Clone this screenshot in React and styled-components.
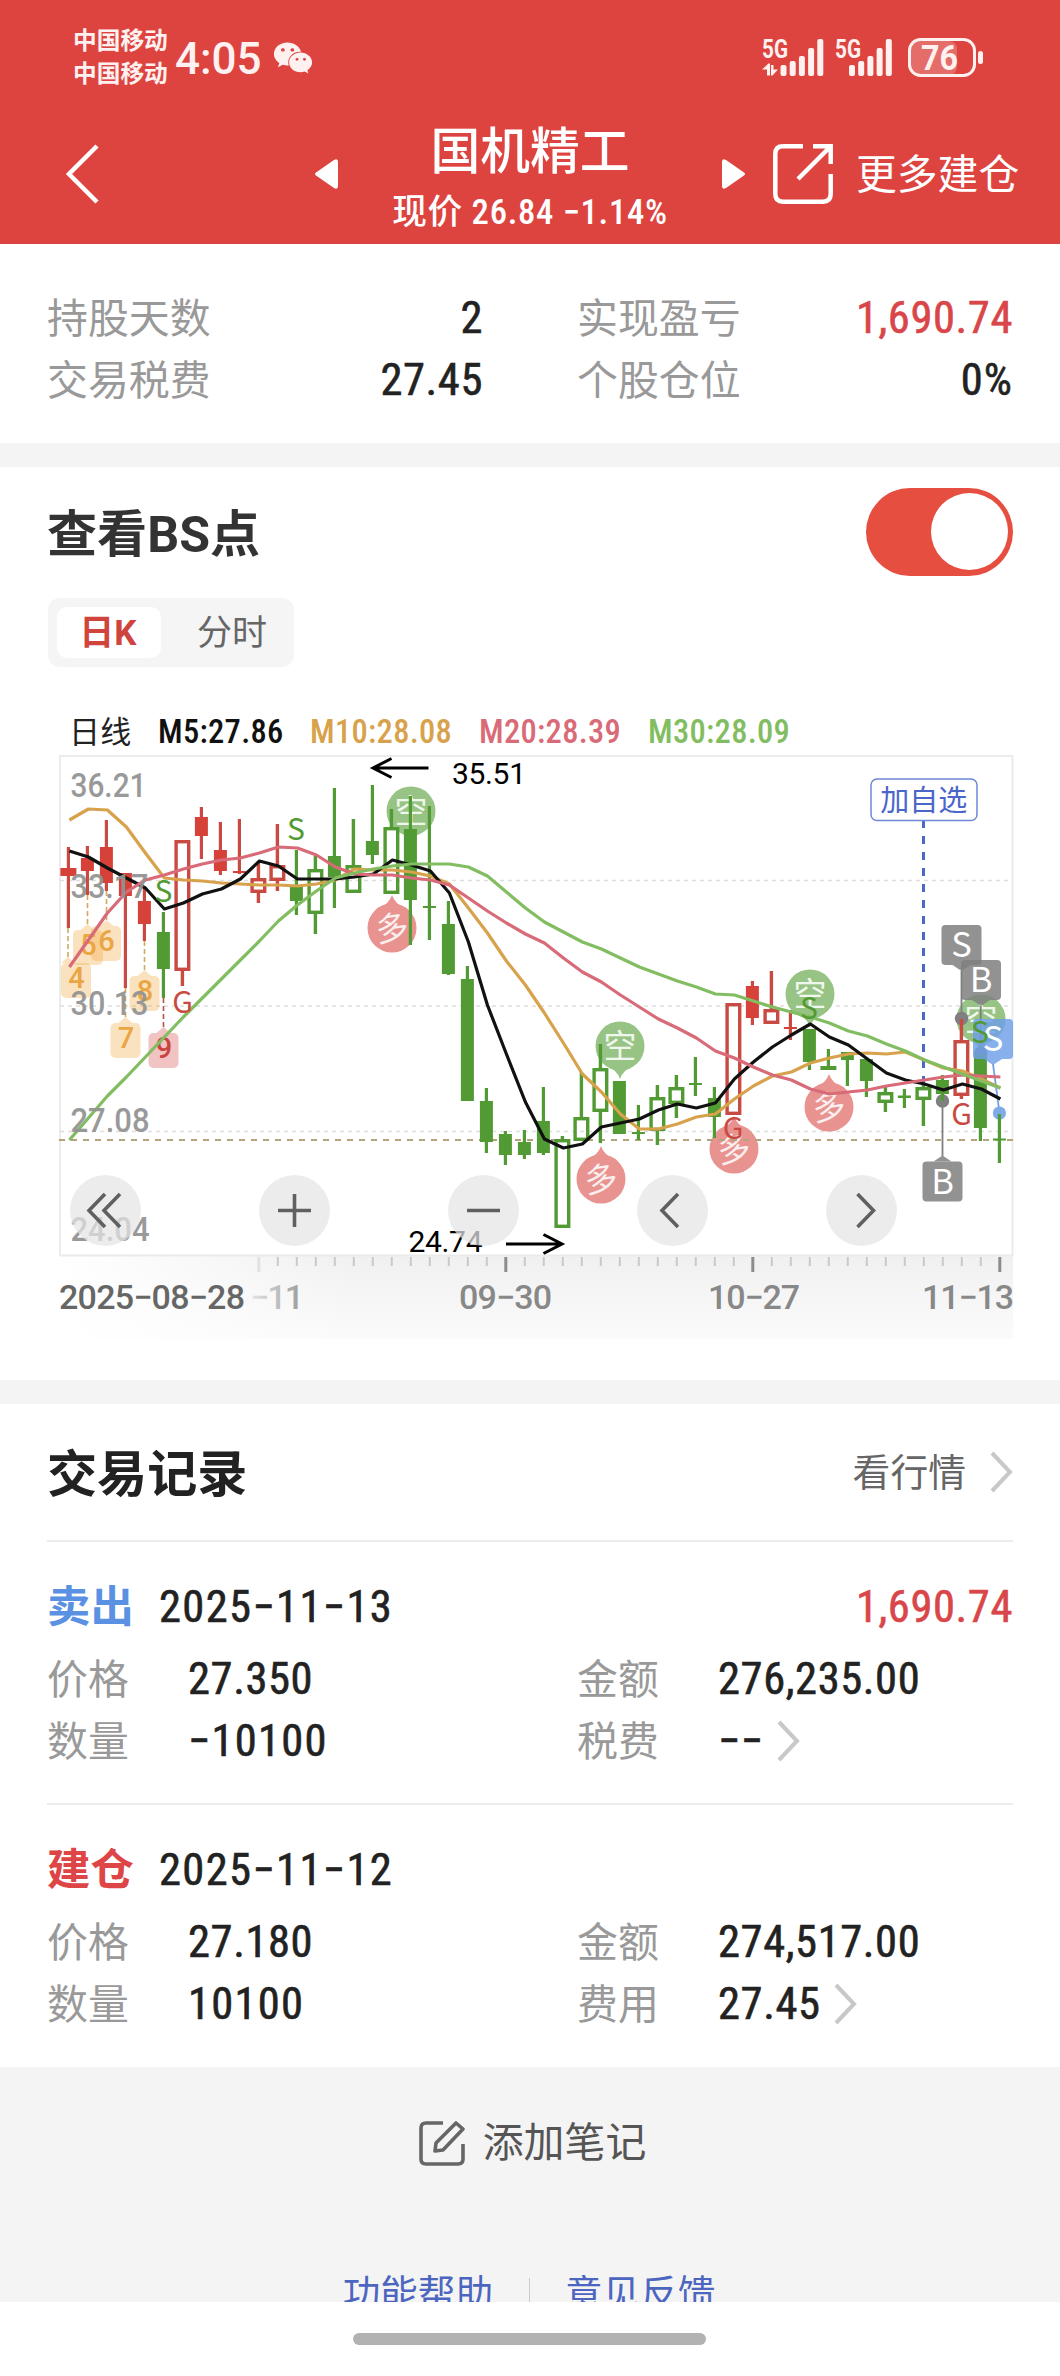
import React, { useState } from 'react';
import styled, { createGlobalStyle } from 'styled-components';
import { FaWeixin } from 'react-icons/fa';

const RED = '#dd4440';
const UP = '#c94a42';
const UP_FILL = '#d64239';
const DOWN = '#529a33';

const GlobalStyle = createGlobalStyle`
  * {
    box-sizing: border-box;
  }
  body {
    margin: 0;
    background: #fff;
    font-family: Roboto, 'Noto Sans CJK SC', sans-serif;
    color: #222;
  }
`;

const Page = styled.div`
  width: 1060px;
  height: 2376px;
  display: flex;
  flex-direction: column;
  overflow: hidden;
`;

/* ---------- header ---------- */

const Header = styled.header`
  height: 244px;
  background: ${RED};
  color: #fff;
`;
const StatusBar = styled.div`
  height: 104px;
  padding: 11px 76px 0 73px;
  display: flex;
  align-items: center;
  color: #fff1f0;
`;
const Carriers = styled.div`
  width: 102px;
  font-size: 23.7px;
  font-weight: 700;
  line-height: 33px;
  white-space: nowrap;
`;
const Clock = styled.div`
  width: 98px;
  padding-top: 2px;
  font-size: 44px;
  font-weight: 500;
  line-height: 50px;
`;
const StatusIcons = styled.div`
  margin-left: auto;
  display: flex;
  align-items: center;

  svg {
    overflow: visible;
  }
`;
const NavBar = styled.div`
  height: 140px;
  padding-left: 65px;
  display: flex;
  align-items: center;
`;
const TitleBlock = styled.div`
  width: 384px;
  padding-top: 11px;
  text-align: center;
`;
const StockName = styled.h1`
  margin: 0;
  font-size: 49.8px;
  font-weight: 500;
  line-height: 64px;
`;
const StockPrice = styled.div`
  font-size: 34.7px;
  font-weight: 500;
  font-stretch: 87%;
  letter-spacing: 0.7px;
  line-height: 56px;
`;
const BackIcon = styled.svg`
  margin-right: 216px;
`;
const ShareIcon = styled.svg`
  margin: 0 23px 0 28px;
`;
const MoreText = styled.span`
  padding-top: 2px;
  font-size: 40.8px;
  line-height: 60px;
  white-space: nowrap;
`;

/* ---------- shared ---------- */

const Section = styled.section`
  padding: 0 47px;
  background: #fff;
  height: ${(p) => p.$height}px;
`;
const Band = styled.div`
  height: 24px;
  background: #f4f4f4;
`;
const Label = styled.span`
  font-size: 40.9px;
  color: #999;
  width: ${(p) => (p.$width ? `${p.$width}px` : 'auto')};
`;
const Num = styled.span`
  font-size: 44.5px;
  font-weight: 400;
  font-stretch: 87%;
  -webkit-text-stroke: 0.6px currentColor;
  letter-spacing: ${(p) => p.$spacing ?? 0.6}px;
  color: ${(p) => p.$color || '#222'};
`;
const SectionTitle = styled.h2`
  margin: 0;
  padding-top: 5px;
  font-size: 50.1px;
  font-weight: 700;
  line-height: 60px;
  color: ${(p) => p.$color || '#222'};
`;

/* ---------- summary ---------- */

const Summary = styled(Section)`
  padding-top: 43px;
`;
const SummaryGrid = styled.div`
  display: grid;
  grid-template-columns: 436px 436px;
  column-gap: 94px;
  grid-auto-rows: 62px;
`;
const SummaryItem = styled.div`
  display: flex;
  justify-content: space-between;
  align-items: baseline;
  line-height: 62px;
`;

/* ---------- chart ---------- */

const TitleRow = styled.div`
  display: flex;
  align-items: center;
  justify-content: space-between;
`;
const ChartHead = styled(TitleRow)`
  padding-top: 21px;
`;
const Switch = styled.button`
  width: 147px;
  height: 88px;
  padding: 5px;
  border: 0;
  border-radius: 44px;
  background: ${(p) => (p.$on ? '#e64e40' : '#ddd')};
  display: flex;
  justify-content: ${(p) => (p.$on ? 'flex-end' : 'flex-start')};
`;
const Knob = styled.span`
  width: 77px;
  height: 77px;
  border-radius: 50%;
  background: #fff;
`;
const Tabs = styled.div`
  width: 246px;
  height: 69px;
  margin: 22px 0 0 1px;
  padding: 9px;
  display: flex;
  border-radius: 12px;
  background: #f5f5f5;
`;
const Tab = styled.button`
  width: ${(p) => (p.$active ? 104 : 124)}px;
  height: 51px;
  padding: ${(p) => (p.$active ? '0 2px 0 0' : '0 0 0 18px')};
  border: 0;
  border-radius: 10px;
  font-family: inherit;
  font-size: 35px;
  font-weight: ${(p) => (p.$active ? 700 : 400)};
  line-height: 54px;
  background: ${(p) => (p.$active ? '#fff' : 'none')};
  color: ${(p) => (p.$active ? '#cf443c' : '#666')};
`;
const Legend = styled.div`
  margin-top: 44px;
  padding-left: 22px;
  height: 44px;
  display: flex;
  gap: 29px;
  line-height: 43px;
  white-space: nowrap;
`;
const LegendItem = styled.span`
  color: ${(p) => p.$color};
  font-size: ${(p) => p.$size || 32.5}px;
  font-weight: ${(p) => p.$weight || 500};
  font-stretch: 87%;
  letter-spacing: 0.3px;
  width: ${(p) => p.$width}px;
`;
const ChartBox = styled.div`
  position: relative;
  margin: 0 0 0 -7px;
  width: 980px;
  height: 590px;
`;
const ChartButtons = styled.div`
  position: absolute;
  left: 30px;
  top: 420px;
  display: flex;
  gap: 118px;
`;
const RoundButton = styled.button`
  width: 71px;
  height: 71px;
  padding: 0;
  border: 0;
  border-radius: 50%;
  background: rgba(228, 228, 228, 0.72);
  display: flex;
`;

/* ---------- trades ---------- */

const TradesHead = styled(TitleRow)`
  height: 138px;
  border-bottom: 2px solid #ececec;
`;
const QuoteLink = styled.span`
  display: flex;
  align-items: center;
  gap: 23px;
  font-size: 37.8px;
  line-height: 42px;
  color: #666;

  span {
    padding-top: 2px;
  }
`;
const Trade = styled.article`
  height: 263px;
  padding-top: 32px;
  border-bottom: ${(p) => (p.$last ? '0' : '2px solid #ececec')};
`;
const TradeHead = styled.div`
  display: flex;
  align-items: baseline;
  height: 74px;
  line-height: 66px;
`;
const Side = styled.span`
  width: 112px;
  font-size: 43.4px;
  font-weight: 700;
  color: ${(p) => p.$color};
`;
const Profit = styled(Num)`
  margin-left: auto;
`;
const TradeGrid = styled.div`
  display: grid;
  grid-template-columns: 530px 1fr;
  grid-auto-rows: 62px;
`;
const Field = styled.div`
  display: flex;
  align-items: baseline;
  line-height: 62px;

  svg {
    margin-left: 12px;
    align-self: center;
  }
`;

/* ---------- footer ---------- */

const Footer = styled.footer`
  height: 235px;
  padding-top: 46px;
  background: #f4f4f4;
  overflow: hidden;
`;
const NoteButton = styled.div`
  display: flex;
  justify-content: center;
  align-items: center;
  gap: 18px;
  height: 60px;
  padding-left: 5px;
  font-size: 40.9px;
  line-height: 60px;
  color: #555;

  span {
    height: 60px;
  }
`;
const Links = styled.div`
  display: flex;
  justify-content: center;
  margin-top: 94px;
  padding-right: 2px;
  font-size: 37.6px;
  line-height: 54px;
  color: #4c66c0;
`;
const LinkDivider = styled.i`
  width: 1px;
  height: 40px;
  margin: 11px 35px 0 36px;
  background: #ccc;
`;
const HomeArea = styled.div`
  height: 74px;
  display: flex;
  justify-content: center;
  align-items: center;
  padding-right: 1px;
`;
const HomeBar = styled.div`
  width: 353px;
  height: 12px;
  border-radius: 6px;
  background: #b2b2b2;
`;

/* ---------- chart data ---------- */

// [high, body top, body bottom, low, kind]
// r / g = filled, R / G = hollow, a body under 3px is a doji
const candles = [
  [847, 868, 876, 928, 'r'],
  [846, 858, 871, 895, 'r'],
  [820, 847, 883, 891, 'r'],
  [873, 873, 896, 988, 'r'],
  [888, 901, 924, 941, 'r'],
  [912, 932, 969, 998, 'g'],
  [840, 840, 971, 986, 'R'],
  [807, 817, 836, 859, 'r'],
  [822, 850, 871, 875, 'r'],
  [819, 871, 873, 874, 'r'],
  [863, 878, 893, 903, 'R'],
  [824, 865, 881, 891, 'R'],
  [850, 886, 901, 915, 'g'],
  [856, 869, 914, 934, 'G'],
  [788, 856, 877, 908, 'g'],
  [819, 865, 893, 893, 'G'],
  [785, 841, 855, 864, 'g'],
  [809, 827, 894, 894, 'G'],
  [796, 829, 900, 945, 'g'],
  [806, 906, 908, 940, 'g'],
  [901, 924, 974, 975, 'g'],
  [966, 979, 1101, 1101, 'g'],
  [1088, 1101, 1142, 1153, 'g'],
  [1131, 1134, 1155, 1165, 'g'],
  [1130, 1142, 1155, 1159, 'g'],
  [1087, 1121, 1153, 1155, 'g'],
  [1136, 1139, 1228, 1228, 'G'],
  [1072, 1117, 1141, 1141, 'G'],
  [1044, 1068, 1112, 1143, 'G'],
  [1081, 1081, 1134, 1134, 'g'],
  [1105, 1132, 1134, 1140, 'g'],
  [1085, 1097, 1131, 1145, 'G'],
  [1075, 1087, 1104, 1118, 'G'],
  [1057, 1083, 1085, 1096, 'g'],
  [1087, 1098, 1117, 1138, 'g'],
  [1003, 1003, 1115, 1115, 'R'],
  [981, 986, 1018, 1025, 'r'],
  [971, 1009, 1024, 1024, 'R'],
  [1010, 1027, 1029, 1040, 'r'],
  [1029, 1029, 1062, 1070, 'g'],
  [1049, 1066, 1070, 1070, 'g'],
  [1052, 1052, 1060, 1086, 'g'],
  [1059, 1059, 1081, 1097, 'g'],
  [1087, 1092, 1103, 1112, 'G'],
  [1089, 1095.5, 1098, 1108, 'g'],
  [1084, 1087, 1100, 1126, 'G'],
  [1075, 1080, 1094, 1101, 'g'],
  [1019, 1040, 1096, 1099, 'R'],
  [1054, 1054, 1128, 1141, 'g'],
  [1114, 1138.5, 1140.5, 1163, 'g'],
];

const averages = [
  {
    color: '#d8a24c',
    points: [
      820, 809, 810, 827, 853, 878, 880, 881, 883, 884, 885, 885, 886, 884, 880, 869, 870, 870,
      872, 876, 884, 908, 933, 961, 985, 1013, 1043, 1074, 1092, 1114, 1129, 1129, 1124, 1117,
      1114, 1099, 1086, 1076, 1072, 1063, 1058, 1054, 1053, 1054, 1052, 1060, 1068, 1071, 1079,
      1088,
    ],
  },
  {
    color: '#111',
    points: [
      851, 857, 868, 878, 888, 909, 903, 894, 889, 879, 861, 866, 879, 879, 879, 877, 874, 860,
      865, 871, 893, 942, 1005, 1054, 1102, 1139, 1148, 1144, 1127, 1123, 1119, 1110, 1104, 1108,
      1103, 1079, 1062, 1047, 1035, 1024, 1037, 1045, 1059, 1073, 1080, 1084, 1090, 1084, 1089,
      1099,
    ],
  },
  {
    color: '#d96a78',
    points: [
      967, 940, 913, 892, 880, 875, 869, 864, 860, 858, 853, 847, 848, 855, 867, 874, 875, 875,
      878, 880, 885, 898, 911, 923, 934, 943, 958, 972, 982, 995, 1007, 1019, 1028, 1038, 1051,
      1058, 1067, 1075, 1080, 1089, 1094, 1092, 1090, 1086, 1083, 1080, 1077, 1075, 1076, 1077,
    ],
  },
  {
    color: '#82bd61',
    points: [
      1140, 1118, 1096, 1077, 1057, 1037, 1017, 998, 979, 960, 941, 921, 905, 891, 878, 873, 869,
      866, 864, 864, 864, 867, 876, 892, 908, 922, 932, 942, 949, 958, 967, 974, 981, 987, 994,
      995, 1001, 1007, 1012, 1017, 1023, 1031, 1036, 1044, 1051, 1060, 1067, 1074, 1081, 1088,
    ],
  },
];

const nineTurns = [
  { n: 4, x: 61, y: 963, tip: 68, from: 928 },
  { n: 5, x: 73, y: 930, tip: 87.5, from: 895 },
  { n: 6, x: 91, y: 926, tip: 106.5, from: 891 },
  { n: 7, x: 110.5, y: 1023, tip: 125.5, from: 988 },
  { n: 8, x: 129.5, y: 976, tip: 144.5, from: 941 },
  { n: 9, x: 148.5, y: 1033, tip: 163.5, from: 998, hot: true },
];

const balloons = [
  { text: '空', x: 411, y: 811 },
  { text: '空', x: 620, y: 1046 },
  { text: '空', x: 810, y: 994 },
  { text: '空', x: 981, y: 1019 },
  { text: '多', x: 392, y: 928 },
  { text: '多', x: 601, y: 1179 },
  { text: '多', x: 734, y: 1149 },
  { text: '多', x: 829, y: 1107 },
];

const letters = [
  ['S', 163.5, 902],
  ['S', 296, 840],
  ['S', 809, 1019],
  ['S', 980, 1043],
  ['G', 182.5, 1013],
  ['G', 733, 1139],
  ['G', 961.5, 1125],
];

const priceLabels = [
  ['36.21', 797, 74],
  ['33.17', 898, 76],
  ['30.13', 1015, 76],
  ['27.08', 1132, 77],
  ['24.04', 1241, 77],
];

const dateLabels = [
  ['09−30', 460, 91],
  ['10−27', 709, 90],
  ['11−13', 923, 90],
];

const candleX = (i) => 68.4 + i * 19;

const Candle = ({ index, data }) => {
  const [high, top, bottom, low, kind] = data;
  const x = candleX(index);
  const rising = kind.toLowerCase() === 'r';
  const stroke = rising ? UP : DOWN;

  if (kind === 'R' || kind === 'G') {
    return (
      <g stroke={stroke} strokeWidth="3.4" fill="none">
        {top - high > 1 && <path d={`M${x} ${high}V${top}`} />}
        {low - bottom > 1 && <path d={`M${x} ${bottom}V${low}`} />}
        <rect x={x - 6.3} y={top + 1.7} width="12.6" height={bottom - top - 3.4} />
      </g>
    );
  }
  return (
    <g>
      <path d={`M${x} ${high}V${low}`} stroke={stroke} strokeWidth="3.2" />
      <rect
        x={x - (index === 0 || index === 40 ? 8 : 6.5)}
        y={top}
        width={index === 0 || index === 40 ? 16 : 13}
        height={bottom - top}
        fill={rising ? UP_FILL : DOWN}
      />
    </g>
  );
};

const NineTurn = ({ n, x, y, tip, from, hot }) => (
  <g>
    <path
      d={`M${tip} ${from}V${y - 6}`}
      stroke={hot ? '#b8504d' : '#d3a95f'}
      strokeWidth="1.6"
      strokeDasharray="5 3"
    />
    <path
      d={`M${tip - 7} ${y}l7 -6l7 6z`}
      fill={hot ? '#d94a4a' : '#f3a83c'}
      opacity="0.33"
    />
    <rect
      x={x}
      y={y}
      width="30"
      height="35"
      rx="5"
      fill={hot ? '#d94a4a' : '#f3a83c'}
      opacity="0.33"
    />
    <text
      x={x + 15.5}
      y={y + 25}
      fontSize="29"
      fontWeight="500"
      textAnchor="middle"
      fill={hot ? '#c9443f' : '#eaa544'}
    >
      {n}
    </text>
  </g>
);

const Balloon = ({ text, x, y }) => {
  const short = text === '空';
  return (
    <g>
      <g fill={short ? '#97c485' : '#e89390'}>
        <circle cx={x} cy={y} r="24.5" />
        {short ? (
          <path d={`M${x - 13} ${y + 20}Q${x - 3} ${y + 24} ${x} ${y + 33}Q${x + 3} ${y + 24} ${x + 13} ${y + 20}z`} />
        ) : (
          <path d={`M${x - 13} ${y - 20}Q${x - 3} ${y - 24} ${x} ${y - 33}Q${x + 3} ${y - 24} ${x + 13} ${y - 20}z`} />
        )}
      </g>
      <text
        x={x}
        y={y + 12}
        fontSize="33"
        textAnchor="middle"
        fill="#fff"
        opacity="0.85"
        transform={short ? undefined : `rotate(-8 ${x} ${y})`}
      >
        {text}
      </text>
    </g>
  );
};

const Flag = ({ text, x, y, tipX, up, color, opacity }) => (
  <g>
    <g fill={color} opacity={opacity}>
      <rect x={x} y={y} width="40" height="40" rx="4" />
      <path d={up ? `M${tipX - 9} ${y}l9 -6l9 6z` : `M${tipX - 9} ${y + 40}l9 6l9 -6z`} />
    </g>
    <text
      x={x + 20}
      y={y + 32}
      fontSize="34.5"
      textAnchor="middle"
      fill="#fff"
      fontFamily="'Noto Sans CJK SC', sans-serif"
    >
      {text}
    </text>
  </g>
);

const ChartSvg = styled.svg`
  font-family: Roboto, 'Noto Sans CJK SC', sans-serif;
`;

const KLineChart = () => (
  <ChartSvg width="980" height="590" viewBox="40 755 980 590">
    <defs>
      <linearGradient id="axisShade" x1="0" y1="0" x2="0" y2="1">
        <stop offset="0" stopColor="#f0f0f0" />
        <stop offset="1" stopColor="#fbfbfb" />
      </linearGradient>
      <linearGradient id="axisFade" x1="0" y1="0" x2="1" y2="0">
        <stop offset="0" stopColor="#fff" />
        <stop offset="1" stopColor="#fff" stopOpacity="0" />
      </linearGradient>
      <linearGradient id="dateFade" x1="0" y1="0" x2="1" y2="0">
        <stop offset="0" stopColor="#e6e6e6" />
        <stop offset="1" stopColor="#999" />
      </linearGradient>
    </defs>

    <rect x="60" y="1256" width="953" height="83" fill="url(#axisShade)" />
    <rect x="60" y="1256" width="300" height="84" fill="url(#axisFade)" />
    <rect x="60" y="756" width="952.5" height="499.5" fill="none" stroke="#ebebeb" strokeWidth="2" />

    <g stroke="#dedede" strokeWidth="1.3" strokeDasharray="4 4">
      <path d="M60 880.5H1012M60 1006H1012M60 1131.5H1012" />
    </g>

    {balloons.map((b) => (
      <Balloon key={`${b.text}${b.x}`} {...b} />
    ))}
    <path d="M59 1140H1013" stroke="#b3a27c" strokeWidth="1.8" strokeDasharray="6 6" />
    <path d="M923.5 820V1086" stroke="#4a68c8" strokeWidth="3" strokeDasharray="8 8" />

    {/* trade pins, under the candles */}
    <g stroke="#7f7f7f" strokeWidth="1.8" fill="#808080">
      <path d="M961.5 971V1019M980.7 1006V1052M942.5 1101V1156" />
      <circle cx="961.5" cy="1018.5" r="5.8" />
      <circle cx="980.7" cy="1053" r="5.8" />
      <circle cx="942.5" cy="1101" r="5.8" />
    </g>
    <path d="M993 1064L999.4 1112" stroke="#6fa0e4" strokeWidth="1.8" />
    <circle cx="999.4" cy="1113" r="6.6" fill="#7fabe8" />

    {candles.map((c, i) => (
      <Candle key={i} index={i} data={c} />
    ))}
    {nineTurns.map((t) => (
      <NineTurn key={t.n} {...t} />
    ))}

    {averages.map((line) => (
      <polyline
        key={line.color}
        points={line.points.map((y, i) => `${candleX(i) + 1},${y}`).join(' ')}
        fill="none"
        stroke={line.color}
        strokeWidth="3.2"
        strokeLinejoin="round"
      />
    ))}

    <Flag text="S" x={941.5} y={925} tipX={961.5} color="#808080" opacity="0.85" />
    <Flag text="B" x={961} y={960} tipX={981} color="#808080" opacity="0.85" />
    <Flag text="B" x={922.5} y={1161.5} tipX={942.5} up color="#808080" opacity="0.85" />
    <Flag text="S" x={973} y={1019} tipX={993} color="#6e9fe8" opacity="0.82" />

    {letters.map(([text, x, y]) => (
      <text
        key={`${text}${x}`}
        x={x}
        y={y}
        fontSize="30"
        textAnchor="middle"
        fill={text === 'S' ? DOWN : UP}
        fontFamily="'Noto Sans CJK SC', sans-serif"
      >
        {text}
      </text>
    ))}

    <rect x="871" y="779" width="106" height="41.5" rx="6" fill="#fff" stroke="#6c88d6" strokeWidth="1.5" />
    <text x="923.7" y="811" fontSize="29" textAnchor="middle" fill="#4a66c8">
      加自选
    </text>

    {priceLabels.map(([text, y, width]) => (
      <text
        key={text}
        x="70.5"
        y={y}
        fontSize="34"
        fontWeight="500"
        fill="#939393"
        opacity="0.94"
        textLength={width + 2}
        lengthAdjust="spacingAndGlyphs"
      >
        {text}
      </text>
    ))}

    <g fontSize="30" fill="#000">
      <text x="452" y="784" textLength="74" lengthAdjust="spacing">
        35.51
      </text>
      <text x="408.5" y="1252" textLength="74" lengthAdjust="spacing">
        24.74
      </text>
    </g>
    <g fill="none" stroke="#000" strokeWidth="3">
      <path d="M428.500 768H373M391.500 758.500L373 768L391.500 777.500" />
      <path d="M506 1244H562M543.500 1234.500L562 1244L543.500 1253.500" />
    </g>

    {/* time axis */}
    {Array.from({ length: 40 }, (_, i) => {
      const x = 258.8 + i * 19;
      const major = i === 13 || i === 26 || i === 39;
      if (i === 0) {
        return <path key={i} d={`M${x} 1257V1272`} stroke="#e2e2e2" strokeWidth="3" />;
      }
      return (
        <path
          key={i}
          d={`M${x} 1257V${major ? 1272 : 1266}`}
          stroke={major ? '#8c8c8c' : '#c9c9c9'}
          strokeWidth={major ? 3 : 2}
        />
      );
    })}
    <g fontSize="34" fontWeight="500">
      <text x="59" y="1308.5" fill="#666" textLength="186" lengthAdjust="spacing">
        2025−08−28
      </text>
      <text x="250" y="1308.500" fill="url(#dateFade)" textLength="54" lengthAdjust="spacing">
        −11
      </text>
      {dateLabels.map(([text, x, width]) => (
        <text
          key={text}
          x={x - 1}
          y="1308.5"
          fill="#888"
          textLength={width + 2}
          lengthAdjust="spacing"
        >
          {text}
        </text>
      ))}
    </g>
  </ChartSvg>
);

const buttonPaths = [
  'M35 19L19 35.500L35 52M50 19L34 35.500L50 52',
  'M19 35.500H52M35.500 19V52',
  'M19 35.500H52',
  'M41 19L25 35.500L41 52',
  'M31.500 19L47.500 35.500L31.500 52',
];

const Signal = ({ data }) => (
  <svg width="73" height="40" viewBox="0 0 73 40" fill="#fff1f0">
    <text
      x="0"
      y="20"
      fontSize="25.5"
      fontWeight="700"
      textLength="26"
      lengthAdjust="spacingAndGlyphs"
      fontFamily="Roboto, sans-serif"
    >
      5G
    </text>
    {data && <path d="M0 33l5 -5.500v10h2.500v-11.500h-1zM0 31.500h5v6h3v-12h-1.500zM9 27v10.500h1.500l5.500 -6h-4.500v-4.500z" />}
    {[27, 23, 18, 10, 1].map((y, i) => (
      <rect key={y} x={(data ? 18.5 : 14) + i * 9.2} y={y} width="6" height={38 - y} rx="2" />
    ))}
  </svg>
);

const Battery = () => (
  <svg width="76" height="40" viewBox="0 0 76 40">
    <rect x="3" y="3" width="46" height="34" rx="8" fill="#fff" opacity="0.22" />
    <rect x="1.500" y="1.500" width="65" height="36" rx="11" fill="none" stroke="#fff1f0" strokeWidth="3" />
    <rect x="70" y="13" width="5" height="13" rx="2.500" fill="#fff1f0" />
    <text
      x="13"
      y="32"
      fontSize="35"
      fontWeight="700"
      fill="#fff1f0"
      textLength="37"
      lengthAdjust="spacingAndGlyphs"
      fontFamily="Roboto, sans-serif"
    >
      76
    </text>
  </svg>
);

const Chevron = () => (
  <svg width="24" height="42" viewBox="0 0 24 42" fill="none" stroke="#c8c8c8" strokeWidth="4">
    <path d="M3 2L21 21L3 40" />
  </svg>
);

const trades = [
  {
    side: '卖出',
    color: '#5a91e2',
    date: '2025−11−13',
    profit: '1,690.74',
    price: '27.350',
    amount: '276,235.00',
    count: '−10100',
    feeLabel: '税费',
    fee: '−−',
  },
  {
    side: '建仓',
    color: '#de4547',
    date: '2025−11−12',
    price: '27.180',
    amount: '274,517.00',
    count: '10100',
    feeLabel: '费用',
    fee: '27.45',
  },
];

const App = () => {
  const [showBS, setShowBS] = useState(true);
  const [tab, setTab] = useState('day');

  return (
    <Page>
      <GlobalStyle />
      <Header>
        <StatusBar>
          <Carriers>
            <div>中国移动</div>
            <div>中国移动</div>
          </Carriers>
          <Clock>4:05</Clock>
          <FaWeixin size={40} />
          <StatusIcons>
            <Signal data />
            <Signal />
            <Battery />
          </StatusIcons>
        </StatusBar>
        <NavBar>
          <BackIcon width="34" height="60" viewBox="0 0 34 60" fill="none" stroke="#fff" strokeWidth="4.5">
            <path d="M32 2L4 30L32 58" />
          </BackIcon>
          <svg width="23" height="30" viewBox="0 0 23 30" fill="#fff">
            <path d="M1 13.500L19 1Q23 -1 23 3V27Q23 31 19 29L1 16.500Q-1 15 1 13.500z" />
          </svg>
          <TitleBlock>
            <StockName>国机精工</StockName>
            <StockPrice>现价 26.84 −1.14%</StockPrice>
          </TitleBlock>
          <svg width="23" height="30" viewBox="0 0 23 30" fill="#fff">
            <path d="M22 13.500L4 1Q0 -1 0 3V27Q0 31 4 29L22 16.500Q24 15 22 13.500z" />
          </svg>
          <ShareIcon width="60" height="60" viewBox="0 0 60 60" fill="none" stroke="#fff" strokeWidth="4.500">
            <path d="M30 2.300H10Q2.300 2.300 2.300 10V50Q2.300 57.700 10 57.700H50Q57.700 57.700 57.700 50V30" />
            <path d="M40 2.300H57.700V20M57 3L25 35" />
          </ShareIcon>
          <MoreText>更多建仓</MoreText>
        </NavBar>
      </Header>

      <Summary $height={199}>
        <SummaryGrid>
          <SummaryItem>
            <Label>持股天数</Label>
            <Num>2</Num>
          </SummaryItem>
          <SummaryItem>
            <Label>实现盈亏</Label>
            <Num $color="#d9464a">1,690.74</Num>
          </SummaryItem>
          <SummaryItem>
            <Label>交易税费</Label>
            <Num>27.45</Num>
          </SummaryItem>
          <SummaryItem>
            <Label>个股仓位</Label>
            <Num $spacing={1}>0%</Num>
          </SummaryItem>
        </SummaryGrid>
      </Summary>
      <Band />

      <Section $height={913}>
        <ChartHead>
          <SectionTitle $color="#333">查看BS点</SectionTitle>
          <Switch $on={showBS} onClick={() => setShowBS(!showBS)}>
            <Knob />
          </Switch>
        </ChartHead>
        <Tabs>
          <Tab $active={tab === 'day'} onClick={() => setTab('day')}>
            日K
          </Tab>
          <Tab $active={tab === 'minute'} onClick={() => setTab('minute')}>
            分时
          </Tab>
        </Tabs>
        <Legend>
          <LegendItem $color="#222" $size={31} $weight={400} $width={60}>
            日线
          </LegendItem>
          <LegendItem $color="#111" $width={123}>
            M5:27.86
          </LegendItem>
          <LegendItem $color="#d8a24c" $width={140}>
            M10:28.08
          </LegendItem>
          <LegendItem $color="#d96a78" $width={140}>
            M20:28.39
          </LegendItem>
          <LegendItem $color="#82bd61" $width={140}>
            M30:28.09
          </LegendItem>
        </Legend>
        <ChartBox>
          <KLineChart />
          <ChartButtons>
            {buttonPaths.map((d) => (
              <RoundButton key={d}>
                <svg width="71" height="71" viewBox="0 0 71 71" fill="none" stroke="#606060" strokeWidth="3.600">
                  <path d={d} />
                </svg>
              </RoundButton>
            ))}
          </ChartButtons>
        </ChartBox>
      </Section>
      <Band />

      <Section $height={663}>
        <TradesHead>
          <SectionTitle>交易记录</SectionTitle>
          <QuoteLink>
            <span>看行情</span>
            <Chevron />
          </QuoteLink>
        </TradesHead>
        {trades.map((t, i) => (
          <Trade key={t.date} $last={i === trades.length - 1}>
            <TradeHead>
              <Side $color={t.color}>{t.side}</Side>
              <Num $spacing={1.4}>{t.date}</Num>
              {t.profit && <Profit $color="#d9464a">{t.profit}</Profit>}
            </TradeHead>
            <TradeGrid>
              <Field>
                <Label $width={141}>价格</Label>
                <Num>{t.price}</Num>
              </Field>
              <Field>
                <Label $width={141}>金额</Label>
                <Num>{t.amount}</Num>
              </Field>
              <Field>
                <Label $width={141}>数量</Label>
                <Num $spacing={1.3}>{t.count}</Num>
              </Field>
              <Field>
                <Label $width={141}>{t.feeLabel}</Label>
                <Num>{t.fee}</Num>
                <Chevron />
              </Field>
            </TradeGrid>
          </Trade>
        ))}
      </Section>

      <Footer>
        <NoteButton>
          <svg width="46" height="46" viewBox="0 0 46 46" fill="none" stroke="#666" strokeWidth="3.600">
            <path d="M24 3H7Q2 3 2 8V39Q2 44 7 44H39Q44 44 44 39V24" />
            <path d="M16 31L17 23L37 3L44 9L24 30z" strokeLinejoin="round" />
          </svg>
          <span>添加笔记</span>
        </NoteButton>
        <Links>
          <span>功能帮助</span>
          <LinkDivider />
          <span>意见反馈</span>
        </Links>
      </Footer>
      <HomeArea>
        <HomeBar />
      </HomeArea>
    </Page>
  );
};

export default App;
